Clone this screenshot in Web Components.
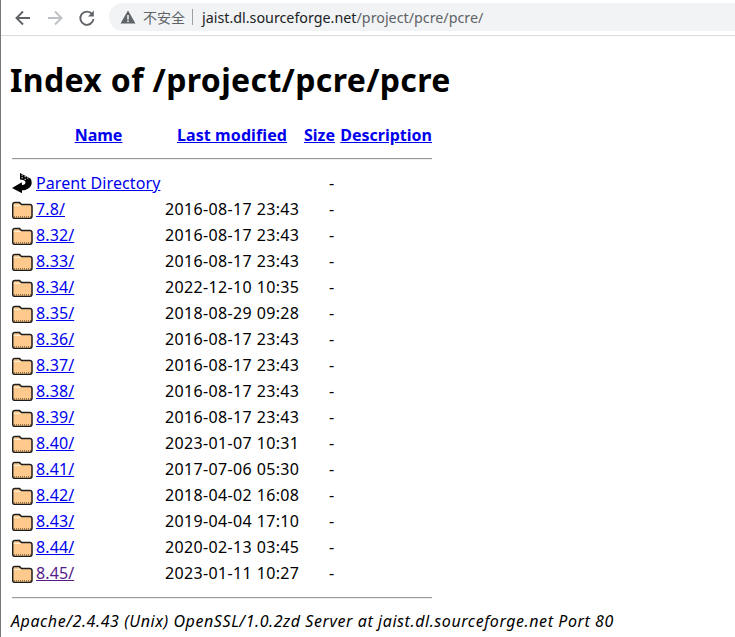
<!DOCTYPE html>
<html lang="zh"><head><meta charset="utf-8"><title>Index of /project/pcre/pcre</title>
<style>html,body{margin:0;background:#fff;font-family:"Noto Sans","Open Sans",sans-serif;overflow:hidden}body{height:637px;border-left:1px solid #777;box-sizing:border-box}</style>
</head><body>
<browser-bar host="jaist.dl.sourceforge.net" path="/project/pcre/pcre/"></browser-bar>
<dir-page>
<h-title slot="title">Index of /project/pcre/pcre</h-title>
<dir-row icon="back" name="Parent Directory" date="" ></dir-row>
<dir-row name="7.8/" date="2016-08-17 23:43"></dir-row>
<dir-row name="8.32/" date="2016-08-17 23:43"></dir-row>
<dir-row name="8.33/" date="2016-08-17 23:43"></dir-row>
<dir-row name="8.34/" date="2022-12-10 10:35"></dir-row>
<dir-row name="8.35/" date="2018-08-29 09:28"></dir-row>
<dir-row name="8.36/" date="2016-08-17 23:43"></dir-row>
<dir-row name="8.37/" date="2016-08-17 23:43"></dir-row>
<dir-row name="8.38/" date="2016-08-17 23:43"></dir-row>
<dir-row name="8.39/" date="2016-08-17 23:43"></dir-row>
<dir-row name="8.40/" date="2023-01-07 10:31"></dir-row>
<dir-row name="8.41/" date="2017-07-06 05:30"></dir-row>
<dir-row name="8.42/" date="2018-04-02 16:08"></dir-row>
<dir-row name="8.43/" date="2019-04-04 17:10"></dir-row>
<dir-row name="8.44/" date="2020-02-13 03:45"></dir-row>
<dir-row name="8.45/" date="2023-01-11 10:27" visited></dir-row>
</dir-page>
<script>
class BrowserBar extends HTMLElement{constructor(){super();const s=this.attachShadow({mode:'open'});
s.innerHTML=`<style>
:host{display:flex;align-items:center;height:35px;border-bottom:1px solid #dcdcdc;padding-left:13px;font-family:"Noto Sans","Open Sans",sans-serif}
svg{display:block;flex:none}
.nav{display:flex;gap:14px;width:95px;flex:none;align-items:center}
.omni{flex:1;height:28px;margin-top:-1px;background:#f1f3f4;border-radius:14px 0 0 14px;display:flex;align-items:center;padding-left:11px;font-size:14.3px;color:#5f6368}
.warn{margin-right:7px}
.ns{font:14px "Noto Sans CJK SC",sans-serif;color:#5f6368}
.sep{width:1px;height:16px;background:#9aa0a6;margin:0 9px 0 7px}
.host{color:#202124}
</style>
<div class="nav">
<svg width="18" height="18" viewBox="0 0 18 18" fill="none" stroke="#5f6368" stroke-width="1.9"><path d="M16 9H3M9 2.500 2.500 9 9 15.500"/></svg>
<svg width="18" height="18" viewBox="0 0 18 18" fill="none" stroke="#bdc1c6" stroke-width="1.9"><path d="M2 9h13M9 2.500 15.500 9 9 15.500"/></svg>
<svg width="18" height="18" viewBox="0 0 18 18" fill="none" stroke="#5f6368" stroke-width="1.9"><path d="M14.200 5.200A6.600 6.600 0 1 0 15.500 10"/><path d="M15.800 1.600v5.800H10z" fill="#5f6368" stroke="none"/></svg>
</div>
<div class="omni">
<svg class="warn" width="16" height="16" viewBox="0 0 16 16"><path fill="#5f6368" d="M8 1.500 15.500 14.500H.5z"/><path fill="#f1f3f4" d="M7.200 6h1.600v4.600H7.200zM7.200 11.400h1.600V13H7.200z"/></svg>
<span class="ns">不安全</span><span class="sep"></span><span class="host">${this.getAttribute('host')}</span><span>${this.getAttribute('path')}</span>
</div>`;}}
customElements.define('browser-bar',BrowserBar);

class HTitle extends HTMLElement{constructor(){super();this.attachShadow({mode:'open'}).innerHTML=`<style>:host{display:block;font:700 32px/44px "Noto Sans","Open Sans",sans-serif;letter-spacing:.35px;color:#000}</style><slot></slot>`;}}
customElements.define('h-title',HTitle);

class DirPage extends HTMLElement{constructor(){super();this.attachShadow({mode:'open'}).innerHTML=`<style>
:host{display:block;padding:22px 0 0 9px;font:16px/26px "Noto Sans","Open Sans",sans-serif;color:#000}
.head{display:grid;grid-template-columns:26px 125px 142px 33px 96px;margin:20px 0 0 0;font-weight:700;height:26px}
.head a{color:#00e;text-decoration:underline;justify-self:center;white-space:nowrap}
.head a:nth-child(3){letter-spacing:.1px}
.head a:last-child{justify-self:end}
hr{width:420px;height:1px;border:0;background:#999;margin:0 0 0 2px;box-shadow:0 1px 0 #eee}
.h1{margin-top:10px;margin-bottom:11px}
.h2{margin-top:11px;margin-bottom:11px}
address{font-style:italic;line-height:24px;white-space:nowrap;letter-spacing:.57px;padding-left:1px}
</style>
<slot name="title"></slot>
<div class="head"><span></span><a href="#">Name</a><a href="#">Last modified</a><a href="#">Size</a><a href="#">Description</a></div>
<hr class="h1"><slot></slot><hr class="h2">
<address>Apache/2.4.43 (Unix) OpenSSL/1.0.2zd Server at jaist.dl.sourceforge.net Port 80</address>`;}}
customElements.define('dir-page',DirPage);

const FOLDER=`<svg width="22" height="20" viewBox="0 0 22 20"><path d="M.7 5.800Q.7 3.600 2.900 3.600H7.500L9.500 5.600H17.800Q20 5.600 20 7.800V17.200Q20 19.400 17.800 19.400H2.900Q.7 19.400 .7 17.200Z" fill="#fdc98c" stroke="#1e1e1e" stroke-width="1.500"/><path d="M2 17.900H19" stroke="#5b3d1a" stroke-width="1" stroke-dasharray="1 1"/><path d="M1.800 6.500H9" stroke="#fff0da" stroke-width="1"/></svg>`;
const BACK=`<svg width="22" height="20" viewBox="0 0 22 20"><path d="M8 0 18.500 5.500C20.500 9 20 12.500 17 15 14.500 17 12 17.500 10 17.300V20.200L0 15 9.800 9.300 10 12C11.500 12.200 13 11.300 13.500 9.800 13.800 8 11.500 6.500 8 6.500Z" fill="#000"/><path d="M9.500 1.500h1.500v1.200H9.500zM12.500 3h1.500v1.200h-1.500zM15 4.500h1.500v1.200H15zM9.500 4h1.500v1.200H9.500zM12.500 5.700h1.500v1.200h-1.500z" fill="#aaa"/></svg>`;
class DirRow extends HTMLElement{constructor(){super();const a=n=>this.getAttribute(n)||'';this.attachShadow({mode:'open'}).innerHTML=`<style>
:host{display:grid;grid-template-columns:26px 128px 165px auto;height:26px;font:16px/26px "Noto Sans","Open Sans",sans-serif;white-space:nowrap}
.i{display:flex;align-items:center;padding-left:2px}
.d{letter-spacing:.36px;padding-left:1px}
a{color:${this.hasAttribute('visited')?'#551a8b':'#00e'};text-decoration:underline;letter-spacing:.1px}
</style>
<span class="i">${a('icon')==='back'?BACK:FOLDER}</span><span><a href="#">${a('name')}</a></span><span class="d">${a('date')}</span><span>-</span>`;}}
customElements.define('dir-row',DirRow);
</script>
</body></html>
